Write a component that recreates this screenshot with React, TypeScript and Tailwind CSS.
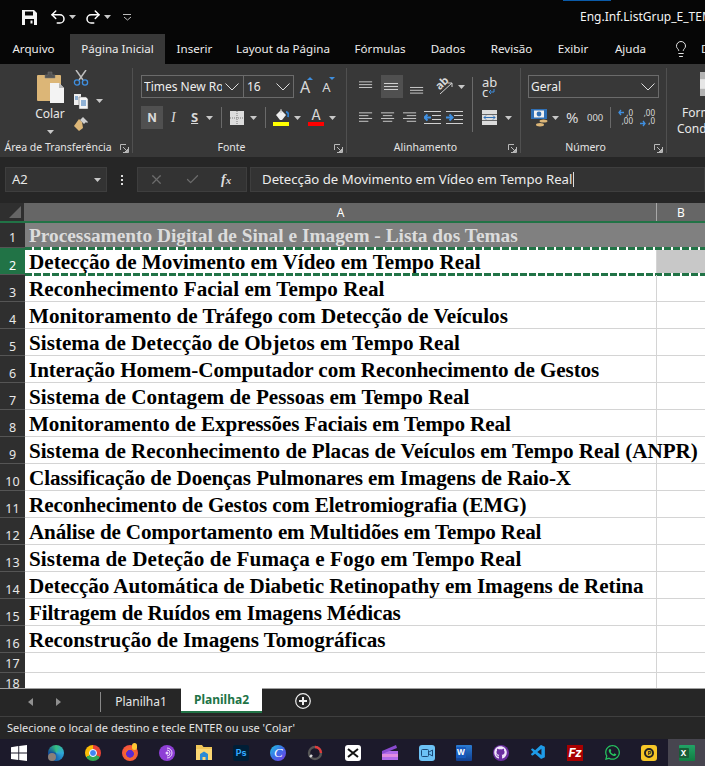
import React from "react";
import { Undo2, Redo2, Lightbulb, X, Check } from "lucide-react";
import { FaGithub, FaWhatsapp } from "react-icons/fa";
import { VscVscode } from "react-icons/vsc";

const rows: [string, string][] = [
  ["Detecção de Movimento em Vídeo em Tempo Real", "tracking-[0.02px]"],
  ["Reconhecimento Facial em Tempo Real", "tracking-[0.03px]"],
  ["Monitoramento de Tráfego com Detecção de Veículos", "tracking-[0.02px]"],
  ["Sistema de Detecção de Objetos em Tempo Real", "tracking-[0.02px]"],
  ["Interação Homem-Computador com Reconhecimento de Gestos", "tracking-[-0.09px]"],
  ["Sistema de Contagem de Pessoas em Tempo Real", "tracking-[0.02px]"],
  ["Monitoramento de Expressões Faciais em Tempo Real", "tracking-[-0.1px]"],
  ["Sistema de Reconhecimento de Placas de Veículos em Tempo Real (ANPR)", ""],
  ["Classificação de Doenças Pulmonares em Imagens de Raio-X", "tracking-[-0.09px]"],
  ["Reconhecimento de Gestos com Eletromiografia (EMG)", "tracking-[-0.1px]"],
  ["Análise de Comportamento em Multidões em Tempo Real", "tracking-[-0.16px]"],
  ["Sistema de Deteção de Fumaça e Fogo em Tempo Real", "tracking-[0.1px]"],
  ["Detecção Automática de Diabetic Retinopathy em Imagens de Retina", "tracking-[-0.08px]"],
  ["Filtragem de Ruídos em Imagens Médicas", "tracking-[-0.18px]"],
  ["Reconstrução de Imagens Tomográficas", "tracking-[-0.06px]"],
];

const Caret = ({ c = "" }: { c?: string }) => (
  <svg width="7" height="4" viewBox="0 0 7 4" className={`shrink-0 ${c}`}><path d="M0 0h7L3.5 4z" fill="#c8c8c8" /></svg>
);

const Chevron = ({ c = "" }: { c?: string }) => (
  <svg width="14" height="8" viewBox="0 0 14 8" fill="none" stroke="#dcdcdc" className={`shrink-0 ${c}`}><path d="M.5 .5L7 7L13.5 .5" /></svg>
);

const Launcher = () => (
  <svg width="9" height="9" viewBox="0 0 9 9" fill="none" stroke="#b8b8b8" strokeWidth="1"><path d="M6 .5H.5V6M8.5 3v5.5H3M3 3l4.5 4.5M7.5 5v2.5H5" /></svg>
);

const Lines = ({ ys, xs }: { ys: number[]; xs: [number, number][] }) => (
  <svg width="16" height="16" viewBox="0 0 16 16" stroke="#d0d0d0" strokeWidth="1">
    {ys.map((y, i) => <path key={i} d={`M${xs[i % xs.length][0]} ${y + 0.5}H${xs[i % xs.length][1]}`} />)}
  </svg>
);

const IndentIcon = ({ right }: { right?: boolean }) => (
  <svg width="17" height="16" viewBox="0 0 17 16" fill="none">
    <path d="M0 1.5H17M8 5.5H17M8 9.5H17M0 13.5H17" stroke="#d0d0d0" />
    {right
      ? <path d="M0 7.5H6M3.5 4.5L6.5 7.5L3.5 10.5" stroke="#3f8fe0" strokeWidth="2" />
      : <path d="M7 7.5H1M3.5 4.5L.5 7.5L3.5 10.5" stroke="#3f8fe0" strokeWidth="2" />}
  </svg>
);

const Group = ({ w, label, children }: { w: string; label: string; children: React.ReactNode }) => (
  <div className={`${w} shrink-0 relative flex flex-col border-r border-[#505050] my-[4px]`}>
    <div className="h-[72px] shrink-0">{children}</div>
    <div className="relative flex-1 flex items-center justify-center pr-[16px] text-[10.5px] text-[#e4e4e4] whitespace-nowrap">
      {label}
      <span className="absolute right-[3px] top-[4px] flex"><Launcher /></span>
    </div>
  </div>
);

const Sep = ({ c }: { c: string }) => <div className={`w-px h-[21px] bg-[#6a6a6a] shrink-0 ${c}`} />;

const Clipboard = () => (
  <div className="flex pt-[3px] pl-[35px] h-full">
    <div className="flex flex-col items-center w-[30px]">
      <svg width="30" height="32" viewBox="0 0 30 32">
        <path d="M3 4h22a1 1 0 0 1 1 1v25H3a1 1 0 0 1-1-1V5a1 1 0 0 1 1-1z" fill="#dcb677" />
        <path d="M10 4h3V1h4v3h3v3H10z" fill="#555" stroke="#777" strokeWidth=".5" />
        <path d="M15 12h9l5 5v15H15z" fill="#f3f3f3" />
        <path d="M24 12v5h5z" fill="#b8b8b8" />
      </svg>
      <span className="text-[12px] text-[#e8e8e8] mt-[3px] leading-[16px]">Colar</span>
      <Caret c="mt-[8px]" />
    </div>
    <div className="flex flex-col ml-[8px] -mt-[1px]">
      <svg width="16" height="16" viewBox="0 0 16 16" fill="none">
        <path d="M3 0L10 10M13 0L6 10" stroke="#bdbdbd" strokeWidth="1.5" />
        <circle cx="4" cy="12.5" r="2.6" stroke="#3f8fe0" strokeWidth="1.3" />
        <circle cx="12" cy="12.5" r="2.6" stroke="#3f8fe0" strokeWidth="1.3" />
      </svg>
      <div className="flex items-center gap-[7px] mt-[7px]">
        <svg width="16" height="16" viewBox="0 0 16 16"><path d="M1 1h7v11H1z" fill="#eee" /><path d="M6 4h7l2 2v10H6z" fill="#f5f5f5" stroke="#555" strokeWidth=".5" /><path d="M8 8h5M8 10h5M8 12h5M2 4h3M2 6h3" stroke="#2a6fb5" /></svg>
        <Caret />
      </div>
      <svg width="16" height="15" viewBox="0 0 16 15" className="mt-[8px]">
        <path d="M9 5L6 2L1 9l5 5l4-3z" fill="#dcb677" />
        <path d="M9 1l5 5l1-1l-5-5zM7 3l4 4l2-2l-4-4z" fill="#cfcfcf" />
      </svg>
    </div>
  </div>
);

const Font = () => (
  <div className="flex flex-col pl-[8px] pt-[7px]">
    <div className="flex items-center h-[23px]">
      <div className="w-[103px] h-[23px] border border-[#6b6b6b] flex items-center pl-[2px] text-[12px] text-[#eee] overflow-hidden">
        <span className="w-[78px] overflow-hidden whitespace-nowrap">Times New Roman</span>
        <Chevron c="ml-[3px]" />
      </div>
      <div className="w-[50px] h-[23px] border border-l-0 border-[#6b6b6b] flex items-center pl-[3px] text-[12px] text-[#eee]">
        <span className="w-[29px]">16</span>
        <Chevron />
      </div>
      <span className="relative ml-[6px] text-[16px] leading-none text-[#d8d8d8]">A<span className="absolute -right-[3px] -top-[2px] flex"><svg width="6" height="3"><path d="M0 3L3 0L6 3z" fill="#3f8fe0" /></svg></span></span>
      <span className="relative ml-[12px] mt-[2px] text-[13px] leading-none text-[#d8d8d8]">A<span className="absolute -right-[4px] -top-[4px] flex"><svg width="6" height="3"><path d="M0 0H6L3 3z" fill="#3f8fe0" /></svg></span></span>
    </div>
    <div className="flex items-center h-[23px] mt-[8px] text-[#d8d8d8]">
      <div className="w-[22px] h-[23px] bg-[#505050] flex items-center justify-center text-[12px] font-bold font-['Inter',sans-serif]">N</div>
      <span className="ml-[8px] w-[9px] text-[14px] italic font-['Liberation_Serif',serif]">I</span>
      <span className="ml-[11px] text-[13px] font-bold underline">S</span>
      <Caret c="ml-[8px]" />
      <Sep c="ml-[8px]" />
      <svg className="ml-[8px]" width="14" height="14" viewBox="0 0 14 14"><path d="M0 0h14v14H0z" fill="#dcdcdc" /><path d="M7 0v14M0 7h14" stroke="#7a7a7a" strokeDasharray="1 1" /></svg>
      <Caret c="ml-[6px]" />
      <Sep c="ml-[8px]" />
      <div className="ml-[7px] flex flex-col items-center">
        <svg width="15" height="12" viewBox="0 0 15 12"><path d="M2 6L7 1l5 5-4 5H6z" fill="#eee" /><path d="M7 0v4" stroke="#bbb" /><path d="M12 3c2 0 3 2 2 5" stroke="#2f7fd0" strokeWidth="2" fill="none" /></svg>
        <div className="w-[16px] h-[4px] bg-[#ffff00] mt-[1px]" />
      </div>
      <Caret c="ml-[5px]" />
      <div className="ml-[7px] flex flex-col items-center">
        <span className="text-[14px] leading-[12px] font-['Inter',sans-serif]">A</span>
        <div className="w-[16px] h-[4px] bg-[#ff0000] mt-[1px]" />
      </div>
      <Caret c="ml-[5px]" />
    </div>
  </div>
);

const l = [0, 14] as [number, number];
const Alignment = () => (
  <div className="flex pl-[12px] h-full relative">
    <div className="flex flex-col pt-[7px]">
      <div className="flex h-[23px] items-center">
        <div className="w-[15px] mr-[7px] flex"><Lines ys={[2, 5, 8]} xs={[l]} /></div>
        <div className="w-[22px] h-[23px] bg-[#505050] flex items-center justify-center"><Lines ys={[4, 7, 10]} xs={[l]} /></div>
        <div className="w-[15px] ml-[7px] flex"><Lines ys={[8, 11, 14]} xs={[l]} /></div>
        <div className="ml-[10px] relative w-[18px] h-[18px] text-[#d8d8d8]">
          <span className="absolute left-[0px] top-[-2px] text-[11px] leading-[14px] font-bold -rotate-45">ab</span>
          <svg className="absolute left-0 top-0" width="18" height="18" viewBox="0 0 18 18" fill="none" stroke="#d0d0d0"><path d="M5 16L17 5M17 5h-4M17 5v4" /></svg>
        </div>
        <Caret c="ml-[5px]" />
      </div>
      <div className="flex h-[23px] items-center mt-[8px]">
        <div className="w-[15px] mr-[7px] flex"><Lines ys={[2, 5, 8, 11]} xs={[l, [0, 10]]} /></div>
        <div className="w-[15px] mr-[7px] flex"><Lines ys={[2, 5, 8, 11]} xs={[l, [2, 12]]} /></div>
        <div className="w-[15px] mr-[6px] flex"><Lines ys={[2, 5, 8, 11]} xs={[l, [4, 14]]} /></div>
        <div className="flex mr-[5px]"><IndentIcon /></div>
        <div className="flex"><IndentIcon right /></div>
      </div>
    </div>
    <Sep c="!h-[55px] mt-[9px] ml-[7px]" />
    <div className="flex flex-col pt-[7px] pl-[9px]">
      <div className="h-[23px] flex items-center text-[#e0e0e0] text-[13px] leading-[10px]">
        <div className="flex flex-col"><span>ab</span><span className="flex items-center">c<svg width="7" height="6"><path d="M6 0v3H1M3 1L1 3l2 2" stroke="#3f8fe0" fill="none" /></svg></span></div>
      </div>
      <div className="h-[23px] flex items-center mt-[8px]">
        <svg width="15" height="15" viewBox="0 0 15 15"><path d="M0 0h15v15H0z" fill="#dcdcdc" /><path d="M0 4.5h15M0 10.5h15" stroke="#666" /><path d="M2 7.5H13M4 5.5L2 7.5L4 9.5M11 5.5L13 7.5L11 9.5" stroke="#2f6fb5" fill="none" /></svg>
        <Caret c="ml-[8px]" />
      </div>
    </div>
  </div>
);

const Numero = () => (
  <div className="flex flex-col pl-[7px] pt-[7px]">
    <div className="w-[131px] h-[23px] border border-[#6b6b6b] flex items-center justify-between pl-[2px] pr-[3px] text-[12px] text-[#eee]">
      <span>Geral</span>
      <Chevron />
    </div>
    <div className="flex items-center h-[23px] mt-[8px] text-[#dcdcdc]">
      <svg className="ml-[3px] shrink-0" width="18" height="18" viewBox="0 0 18 18"><path d="M0 0h16v10H0z" fill="#2f6fb5" /><path d="M3 1.5h10v7H3z" fill="#f0f0f0" /><circle cx="8" cy="5" r="2.4" fill="#2f6fb5" /><ellipse cx="12.5" cy="12" rx="4" ry="1.6" fill="#dcb677" /><ellipse cx="9" cy="15.8" rx="4" ry="1.7" fill="#dcb677" /></svg>
      <Caret c="ml-[3px]" />
      <span className="ml-[7px] w-[13px] text-[15px] leading-none">%</span>
      <span className="ml-[8px] w-[15px] text-[9.5px] leading-none">000</span>
      <Sep c="ml-[8px]" />
      <div className="ml-[7px] relative w-[15px] h-[18px] text-[8px] leading-[8px] flex flex-col items-end"><span>,0</span><span>,00</span><svg className="absolute left-0 top-0" width="6" height="7"><path d="M6 3.5H1M3 1L1 3.5L3 6" stroke="#3f8fe0" strokeWidth="1.3" fill="none" /></svg></div>
      <div className="ml-[7px] relative w-[15px] h-[18px] text-[8px] leading-[8px] flex flex-col items-end"><span>,00</span><span>,0</span><svg className="absolute left-0 bottom-0" width="6" height="7"><path d="M0 3.5H5M3 1L5 3.5L3 6" stroke="#3f8fe0" strokeWidth="1.3" fill="none" /></svg></div>
    </div>
  </div>
);

const Tab = ({ t, c }: { t: string; c: string }) => <div className={`h-[30px] flex items-center justify-center text-[11.6px] text-[#ececec] shrink-0 ${c}`}>{t}</div>;

const tb: React.ReactNode[] = [
  <svg width="16" height="16" viewBox="0 0 16 16" fill="#fff"><path d="M0 2.2L7.3 1v6.5H0zM8.2 .9L16 0v7.5H8.2zM0 8.5h7.3V15L0 13.9zM8.2 8.5H16V16l-7.8-1.1z" /></svg>,
  <div className="relative w-[16px] h-[16px] rounded-full bg-[conic-gradient(#36c07f,#2fa8d8,#1565b0,#0f4c9c,#36c07f)]"><div className="absolute left-0 bottom-0 w-[8px] h-[8px] rounded-full bg-[#8a7f78]" /></div>,
  <div className="w-[16px] h-[16px] rounded-full bg-[conic-gradient(#ea4335_0_120deg,#34a853_120deg_240deg,#fbbc05_240deg_360deg)] flex items-center justify-center"><div className="w-[6px] h-[6px] rounded-full bg-[#4285f4] border border-white box-content" /></div>,
  <div className="relative w-[16px] h-[16px] rounded-full bg-[radial-gradient(circle_at_50%_55%,#5a2bd0_30%,#f26a2e_35%,#ff3a50_100%)]"><div className="absolute right-[1px] -top-[2px] w-[5px] h-[7px] rounded-full bg-[#ffc733]" /></div>,
  <svg width="16" height="16" viewBox="0 0 16 16" fill="none"><circle cx="8" cy="8" r="8" fill="#8e3fd6" /><path d="M8 3a5 5 0 0 1 0 10M8 5a3 3 0 0 1 0 6" stroke="#e9d6fb" /><circle cx="8" cy="8" r="1.5" fill="#e9d6fb" /></svg>,
  <svg width="16" height="15" viewBox="0 0 16 15"><path d="M0 0h6l1.5 2H16v13H0z" fill="#f0c659" /><path d="M0 4h16v11H0z" fill="#fbd774" /><path d="M4 15V9l4-2.5L12 9v6H9.5v-3h-3v3z" fill="#2a8ad4" /></svg>,
  <div className="w-[16px] h-[16px] rounded-[2px] bg-[#001e36] flex items-center justify-center text-[9px] leading-none font-bold text-[#31a8ff] font-['Inter',sans-serif]">Ps</div>,
  <div className="w-[16px] h-[16px] rounded-full bg-[linear-gradient(135deg,#22c8e0,#3d6be8,#7a3fe0)] flex items-center justify-center text-[13px] leading-none italic text-white font-['Liberation_Serif',serif]">C</div>,
  <svg width="16" height="16" viewBox="0 0 16 16" fill="none"><circle cx="8" cy="8" r="6" stroke="#555" strokeWidth="2.4" /><path d="M8 2a6 6 0 0 1 6 6" stroke="#e23b3b" strokeWidth="2.4" /><path d="M3 12l2-2" stroke="#ddd" strokeWidth="2.4" /></svg>,
  <div className="w-[16px] h-[16px] rounded-[3px] bg-white flex items-center justify-center"><svg width="12" height="10" viewBox="0 0 12 10" fill="none" stroke="#111" strokeWidth="2"><path d="M1 1l10 8M11 1L1 9" /></svg></div>,
  <svg width="16" height="15" viewBox="0 0 16 15"><path d="M0 6h16v9H0z" fill="#b06be8" /><path d="M0 6L14 0l1 3L0 9z" fill="#8a4bd0" /><path d="M0 9h16v3H0z" fill="#e08be0" /></svg>,
  <div className="w-[16px] h-[16px] rounded-[3px] bg-[#6cc2f5] flex items-center justify-center"><svg width="12" height="8" viewBox="0 0 12 8" fill="none" stroke="#1b4a78"><rect x=".5" y=".5" width="7" height="7" rx="1" /><path d="M8 3l3.5-2v6L8 5" /></svg></div>,
  <div className="relative w-[16px] h-[16px] rounded-[1px] bg-[linear-gradient(180deg,#2b7cd3,#103f91)]"><div className="absolute left-0 top-[2px] w-[10px] h-[11px] rounded-[1px] bg-[#185abd] text-white text-[8px] leading-[11px] text-center font-bold font-['Inter',sans-serif]">W</div></div>,
  <div className="w-[16px] h-[16px] rounded-full bg-[#6b2fa0] flex items-center justify-center"><FaGithub size={13} className="text-[#f0e6fa]" /></div>,
  <VscVscode size={17} className="text-[#1e9be8]" />,
  <div className="w-[16px] h-[16px] bg-[#a80000] flex items-center justify-center text-[12px] leading-none italic font-bold text-white font-['Inter',sans-serif]">Fz</div>,
  <FaWhatsapp size={17} className="text-[#25c45f]" />,
  <div className="w-[16px] h-[16px] rounded-[3px] bg-[#f6c627] flex items-center justify-center"><div className="w-[10px] h-[10px] rounded-full border-2 border-[#222] flex items-center justify-center text-[6px] leading-none font-bold text-[#222]">P</div></div>,
  <div className="relative w-[16px] h-[16px] rounded-[1px] bg-[linear-gradient(180deg,#21a366,#107c41)]"><div className="absolute left-0 top-[3px] w-[10px] h-[10px] rounded-[1px] bg-[#185c37] text-white text-[8px] leading-[10px] text-center font-bold font-['Inter',sans-serif]">X</div></div>,
];

export default function App() {
  return (
    <div className="w-[705px] h-[766px] overflow-hidden flex flex-col bg-[#262626] font-['Noto_Sans',sans-serif]">
      {/* title bar */}
      <div className="relative h-[34px] bg-[#060606] flex items-center text-white shrink-0 overflow-hidden">
        <div className="absolute left-[563px] top-0 w-[48px] h-px bg-[#0a5aa8]" />
        <svg className="ml-[22px] shrink-0" width="15" height="15" viewBox="0 0 15 15"><path d="M0 0h12l3 3v12H0z" fill="#f4f4f4" /><path d="M3 1.5h8v4H3z" fill="#060606" /><path d="M3 9h9v6H3z" fill="#060606" /><path d="M8.5 10.5h2v3h-2z" fill="#f4f4f4" /></svg>
        <Undo2 size={18} strokeWidth={2} className="ml-[12px] shrink-0" />
        <Caret c="ml-[2px]" />
        <Redo2 size={18} strokeWidth={2} className="ml-[8px] shrink-0" />
        <Caret c="ml-[2px]" />
        <svg className="ml-[12px] shrink-0" width="9" height="7" viewBox="0 0 9 7" fill="none" stroke="#bbb"><path d="M0 .5h8M1 3l3.5 3L8 3" /></svg>
        <span className="ml-[448px] text-[12px] whitespace-nowrap text-[#f4f4f4]">Eng.Inf.ListGrup_E_TEMAS</span>
      </div>
      {/* tabs */}
      <div className="h-[30px] bg-[#060606] flex items-center shrink-0 whitespace-nowrap overflow-hidden">
        <Tab t="Arquivo" c="w-[70px] pr-[3px]" />
        <Tab t="Página Inicial" c="w-[95px] bg-[#383838]" />
        <Tab t="Inserir" c="w-[59px]" />
        <Tab t="Layout da Página" c="w-[118px]" />
        <Tab t="Fórmulas" c="w-[76px]" />
        <Tab t="Dados" c="w-[60px]" />
        <Tab t="Revisão" c="w-[67px]" />
        <Tab t="Exibir" c="w-[56px]" />
        <Tab t="Ajuda" c="w-[59px]" />
        <Lightbulb size={18} strokeWidth={1.3} className="ml-[12px] text-[#e8e8e8] shrink-0" />
        <Tab t="D" c="ml-[11px]" />
      </div>
      {/* ribbon */}
      <div className="h-[93px] bg-[#383838] flex shrink-0 overflow-hidden">
        <Group w="w-[133px]" label="Área de Transferência"><Clipboard /></Group>
        <Group w="w-[214px]" label="Fonte"><Font /></Group>
        <Group w="w-[174px]" label="Alinhamento"><Alignment /></Group>
        <Group w="w-[146px]" label="Número"><Numero /></Group>
        <div className="flex flex-col pl-[10px] text-[12px] leading-[16px] text-[#e8e8e8] relative pt-[41px] whitespace-nowrap">
          <span className="pl-[5px]">Formatação</span><span>Condicional</span>
          <div className="absolute left-[33px] top-[8px] w-[16px] h-[24px] bg-[#dcdcdc] grid grid-cols-1 grid-rows-3 gap-px">
            <i className="bg-[#b4b4b4]" /><i className="bg-[#e6e6e6]" /><i className="bg-[#b4b4b4]" />
          </div>
        </div>
      </div>
      {/* formula bar */}
      <div className="h-[46px] flex items-start shrink-0 bg-[#262626] pt-[10px]">
        <div className="ml-[5px] w-[102px] h-[25px] border border-[#3e3e3e] bg-[#333] flex items-center justify-between pl-[6px] pr-[5px] text-[13px] text-[#e8e8e8]">
          <span>A2</span><Caret />
        </div>
        <div className="w-[30px] h-[25px] flex flex-col items-center justify-center gap-[2px]">
          <i className="w-[2px] h-[2px] bg-[#ddd]" /><i className="w-[2px] h-[2px] bg-[#ddd]" /><i className="w-[2px] h-[2px] bg-[#ddd]" />
        </div>
        <div className="w-[110px] h-[25px] border border-[#3e3e3e] bg-[#333] flex items-center">
          <X size={15} className="ml-[11px] text-[#6c6c6c]" />
          <Check size={15} className="ml-[21px] text-[#6c6c6c]" />
          <span className="ml-[21px] text-[14px] italic font-bold text-[#ddd] font-['Liberation_Serif',serif]">f<span className="text-[11px]">x</span></span>
        </div>
        <div className="ml-[3px] flex-1 h-[25px] border border-[#3e3e3e] bg-[#333] flex items-center pl-[11px] text-[13.2px] text-[#ececec] whitespace-nowrap overflow-hidden">
          Detecção de Movimento em Vídeo em Tempo Real<span className="w-px h-[15px] bg-[#ddd] ml-px" />
        </div>
      </div>
      {/* sheet */}
      <div className="h-[485px] shrink-0 flex flex-col overflow-hidden bg-white">
        <div className="h-[20px] shrink-0 flex bg-[#666] border-b-2 border-[#217346] text-white text-[12px] leading-[20px]">
          <div className="w-[25px] shrink-0 bg-[#2f2f2f] flex items-end justify-end border-r border-[#666] pr-[3px] pb-[3px]"><svg width="12" height="12"><path d="M12 0v12H0z" fill="#666" /></svg></div>
          <div className="w-[632px] shrink-0 text-center border-r border-[#a8a8a8]">A</div>
          <div className="flex-1 text-center">B</div>
        </div>
        <div className="h-[25px] shrink-0 flex bg-[#808080]">
          <div className="w-[25px] shrink-0 bg-[#2f2f2f] border-b border-[#555] text-[#e8e8e8] text-[12.5px] text-center leading-[29px] overflow-hidden">1</div>
          <div className="pl-[4px] font-['Liberation_Serif',serif] font-bold text-[19.33px] leading-[26px] text-[#dcdcdc] whitespace-nowrap">Processamento Digital de Sinal e Imagem - Lista dos Temas</div>
        </div>
        {rows.map(([t, tr], i) => (
          <div key={i} className="relative h-[27px] shrink-0 flex">
            <div className={`w-[25px] shrink-0 border-b border-[#555] text-[12.5px] text-center leading-[35px] overflow-hidden ${i === 0 ? "bg-[#217346] text-white" : "bg-[#2f2f2f] text-[#e8e8e8]"}`}>{i + 2}</div>
            <div className={`w-[632px] shrink-0 border-b border-r border-[#d4d4d4] pl-[4px] font-['Liberation_Serif',serif] font-bold text-[21.13px] leading-[29px] text-black whitespace-nowrap ${tr}`}>{t}</div>
            <div className={`flex-1 border-b border-[#d4d4d4] ${i === 0 ? "bg-[#c8c8c8]" : ""}`} />
            {i === 0 && (
              <>
                <div className="absolute left-[25px] right-0 -top-[1px] h-[3px] bg-[repeating-linear-gradient(90deg,#217346_0_7px,#ffffff_7px_9px)]" />
                <div className="absolute left-[25px] right-0 -bottom-[1px] h-[3px] bg-[repeating-linear-gradient(90deg,#217346_0_7px,#ffffff_7px_9px)]" />
              </>
            )}
          </div>
        ))}
        {[17, 18].map((n) => (
          <div key={n} className="h-[20px] shrink-0 flex">
            <div className="w-[25px] shrink-0 bg-[#2f2f2f] border-b border-[#555] text-[#e8e8e8] text-[12.5px] text-center leading-[21px]">{n}</div>
            <div className="w-[632px] shrink-0 border-b border-r border-[#d4d4d4]" />
            <div className="flex-1 border-b border-[#d4d4d4]" />
          </div>
        ))}
      </div>
      {/* sheet tabs */}
      <div className="h-[28px] shrink-0 flex border-t border-[#a0a0a0] bg-[#262626] text-[12px]">
        <svg className="ml-[28px] mt-[9px]" width="5" height="8"><path d="M5 0v8L0 4z" fill="#909090" /></svg>
        <svg className="ml-[23px] mt-[9px]" width="5" height="8"><path d="M0 0v8l5-4z" fill="#909090" /></svg>
        <div className="ml-[39px] mt-[3px] w-px h-[20px] bg-[#888]" />
        <div className="w-[80px] h-[25px] flex items-center justify-center text-[#e6e6e6]">Planilha1</div>
        <div className="w-[81px] h-[25px] -mt-px flex items-center justify-center bg-white border-b-2 border-[#217346] font-bold text-[#217346]">Planilha2</div>
        <svg className="ml-[33px] mt-[4px]" width="16" height="16" viewBox="0 0 16 16" fill="none" stroke="#eee"><circle cx="8" cy="8" r="7.3" strokeWidth="1.2" /><path d="M8 4v8M4 8h8" strokeWidth="2" /></svg>
      </div>
      {/* status */}
      <div className="h-[23px] shrink-0 bg-[#262626] border-t border-[#3f3f3f] flex items-center pl-[7px] text-[11px] text-[#e4e4e4]">
        Selecione o local de destino e tecle ENTER ou use 'Colar'
      </div>
      {/* taskbar */}
      <div className="flex-1 bg-[#1c1a2b] flex">
        {tb.map((n, i) => (
          <div key={i} className={`flex-1 flex items-center justify-center ${i === 18 ? "bg-[#47454f]" : ""}`}>{n}</div>
        ))}
      </div>
    </div>
  );
}
